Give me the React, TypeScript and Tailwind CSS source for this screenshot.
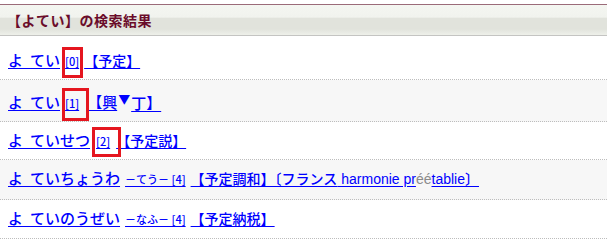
import React from "react";

const font = { fontFamily: '"Noto Sans CJK JP", "Liberation Sans", sans-serif' };

function Small({ children }: { children: React.ReactNode }) {
  return <span className="text-[11px] mx-[5px]">{children}</span>;
}

// "よ" followed by the wide gap seen in the list
function Yo() {
  return <span className="tracking-[7px]">よ</span>;
}

const latin = "font-normal text-[14px] font-['Liberation_Sans',sans-serif]";

export default function App() {
  return (
    <div className="relative w-[607px] h-[242px] bg-white overflow-hidden" style={font}>
      <div className="h-[4px]" />
      <div className="h-[32px] border-t border-[#9b6b79] border-b border-b-[#c4c4c2] bg-[linear-gradient(#f4f6f1_0%,#f1f3ee_40%,#e1e3dc_45%,#e1e3dc_80%,#eef0ea_100%)] flex items-center px-[7px]">
        <span className="text-[14px] font-bold text-[#6a0c2a] tracking-[0.5px]">【よてい】の検索結果</span>
      </div>

      <div className="text-[15px] leading-[16px] font-medium text-[#0000ff] whitespace-nowrap">
        {/* row 1 */}
        <div className="h-[44px] border-b border-dotted border-[#bdbdbd] flex items-end pb-[10px] px-[8px]">
          <a className="underline underline-offset-2">
            <Yo />てい<Small>[0]</Small>
            <span className="text-[14px]">【予定】</span>
          </a>
        </div>
        {/* row 2 */}
        <div className="h-[42px] bg-[#f7f7f7] border-b border-dotted border-[#bdbdbd] flex items-end pb-[10px] px-[8px]">
          <a className="underline underline-offset-2">
            <Yo />てい<span className="text-[11px] ml-[5px] mr-[8px]">[1]</span>【興
          </a>
          <span className="text-[12px] leading-[12px] self-start mt-[13px] mx-[1px]">▼</span>
          <a className="underline underline-offset-2">丁】</a>
        </div>
        {/* row 3 */}
        <div className="h-[38px] border-b border-dotted border-[#bdbdbd] flex items-end pb-[10px] px-[8px]">
          <a className="underline underline-offset-2">
            <Yo />ていせつ<span className="text-[11px] ml-[6px] mr-[6px]">[2]</span>
            <span className="text-[14px]">【予定説】</span>
          </a>
        </div>
        {/* row 4 */}
        <div className="h-[40px] bg-[#f7f7f7] border-b border-dotted border-[#bdbdbd] flex items-end pb-[12px] px-[8px]">
          <a className="underline underline-offset-2">
            <Yo />ていちょうわ<Small>－てう－ [4]</Small>
            <span className="text-[14px]">【予定調和】〔フランス</span>
            <span className={latin}> harmonie pr</span>
          </a>
          <span className={`text-[#8a8a8a] ${latin}`}>éé</span>
          <a className="underline underline-offset-2">
            <span className={latin}>tablie</span>
            <span className="text-[14px]">〕</span>
          </a>
        </div>
        {/* row 5 */}
        <div className="h-[39px] border-b border-dotted border-[#bdbdbd] flex items-end pb-[11px] px-[8px]">
          <a className="underline underline-offset-2">
            <Yo />ていのうぜい<Small>－なふ－ [4]</Small>
            <span className="text-[14px]">【予定納税】</span>
          </a>
        </div>
      </div>

      {/* annotation boxes */}
      <div className="absolute left-[62px] top-[47px] w-[21px] h-[31px] border-[3px] border-[#e5161f]" />
      <div className="absolute left-[62px] top-[88px] w-[27px] h-[33px] border-[3px] border-[#e5161f]" />
      <div className="absolute left-[92px] top-[127px] w-[29px] h-[30px] border-[3px] border-[#e5161f]" />
    </div>
  );
}
